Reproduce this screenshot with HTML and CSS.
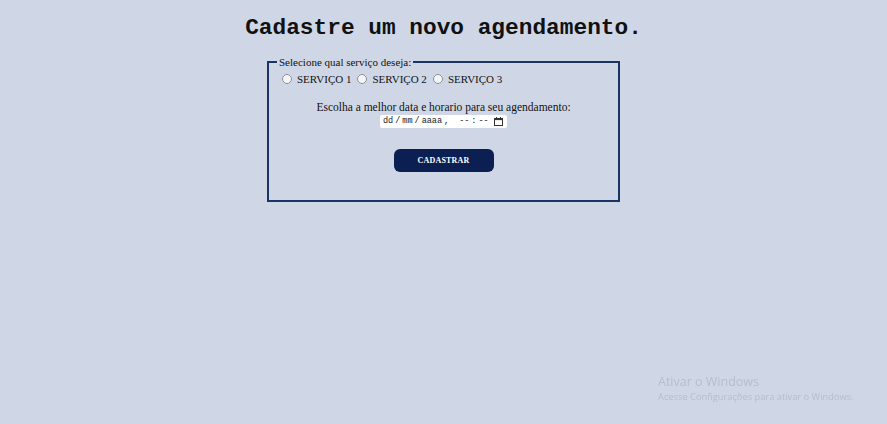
FILE: index.html
```html
<!DOCTYPE html>
<html lang="pt-BR">
<head>
<meta charset="utf-8">
<title>Agendamento</title>
<link rel="stylesheet" href="styles.css">
</head>
<body>
<main class="page">
  <h1 class="title">Cadastre um novo agendamento.</h1>
  <form class="form">
    <fieldset class="box">
      <legend class="legend">Selecione qual serviço deseja:</legend>
      <div class="services">
        <label class="opt"><input type="radio" name="s" class="radio"> SERVIÇO 1</label>
        <label class="opt"><input type="radio" name="s" class="radio"> SERVIÇO 2</label>
        <label class="opt"><input type="radio" name="s" class="radio"> SERVIÇO 3</label>
      </div>
      <div class="when">
        <p class="ask">Escolha a melhor data e horario para seu agendamento:</p>
        <div class="dt" role="textbox" aria-label="data e hora">
          <span class="seg">dd</span><span class="sep">/</span><span class="seg">mm</span><span class="sep">/</span><span class="seg">aaaa</span><span class="sep">,</span><span class="seg gap">--</span><span class="sep">:</span><span class="seg">--</span>
          <svg class="cal" width="9" height="9" viewBox="0 0 9 9" aria-hidden="true">
            <rect x="0.5" y="1.5" width="8" height="7" fill="none" stroke="#333" stroke-width="1"/>
            <rect x="0.5" y="1.5" width="8" height="1.6" fill="#333"/>
            <rect x="2" y="0" width="1" height="2" fill="#333"/>
            <rect x="6" y="0" width="1" height="2" fill="#333"/>
          </svg>
        </div>
      </div>
      <div class="actions">
        <button type="button" class="btn">CADASTRAR</button>
      </div>
    </fieldset>
  </form>
</main>
<div class="watermark">
  <div class="wm-title">Ativar o Windows</div>
  <div class="wm-sub">Acesse Configurações para ativar o Windows.</div>
</div>
</body>
</html>
```

FILE: styles.css
```css
html, body {
  margin: 0;
  padding: 0;
}
body {
  background: #cfd7e6;
  font-family: "Liberation Serif", "Times New Roman", serif;
  font-size: 11px;
  color: #111;
  width: 887px;
  height: 424px;
  overflow: hidden;
}
.page {
  display: flex;
  flex-direction: column;
  align-items: center;
}
.title {
  font-family: "Liberation Mono", "Courier New", monospace;
  font-size: 22.8px;
  font-weight: bold;
  margin: 15px 0 0 0;
  line-height: 27px;
  color: #111;
}
.form {
  margin-top: 14px;
}
.box {
  box-sizing: border-box;
  width: 353px;
  height: 146px;
  margin: 0;
  border: 2px solid #1c3464;
  padding: 0 8px 0 8px;
  display: flex;
  flex-direction: column;
}
.legend {
  padding: 0 2px;
  font-size: 11px;
  line-height: 12px;
}
.services {
  display: flex;
  gap: 6px;
  margin-top: 4px;
  line-height: 14px;
}
.opt {
  display: flex;
  align-items: center;
}
.radio {
  margin: 0 5px 0 5px;
  width: 10px;
  height: 10px;
  opacity: 0.75;
}
.opt + .opt .radio {
  margin-left: 0;
}
.when {
  display: flex;
  flex-direction: column;
  align-items: center;
  margin-top: 14px;
}
.ask {
  margin: 0;
  font-size: 11.5px;
  line-height: 14px;
}
.dt {
  margin-top: 1px;
  background: #fff;
  font-family: "Liberation Mono", "DejaVu Sans Mono", monospace;
  font-size: 8.5px;
  line-height: 13px;
  height: 13px;
  width: 127px;
  padding: 0 4px 0 3px;
  box-sizing: border-box;
  border-radius: 2px;
  display: flex;
  align-items: center;
  color: #222;
}
.sep {
  margin: 0 2px;
}
.gap {
  margin-left: 8px;
}
.cal {
  margin-left: auto;
}
.actions {
  display: flex;
  justify-content: center;
  margin-top: 21px;
}
.btn {
  width: 100px;
  height: 23px;
  border: none;
  border-radius: 6px;
  background: #0b1f52;
  color: #fff;
  font-family: "Liberation Serif", serif;
  font-weight: bold;
  font-size: 8px;
  letter-spacing: 0.2px;
  padding: 0;
}
.watermark {
  position: fixed;
  left: 658px;
  top: 374px;
  font-family: "Open Sans", "Noto Sans", sans-serif;
  color: #b6bdcc;
}
.wm-title {
  font-size: 12.5px;
  line-height: 16px;
}
.wm-sub {
  font-size: 9.3px;
  line-height: 14px;
}
```
